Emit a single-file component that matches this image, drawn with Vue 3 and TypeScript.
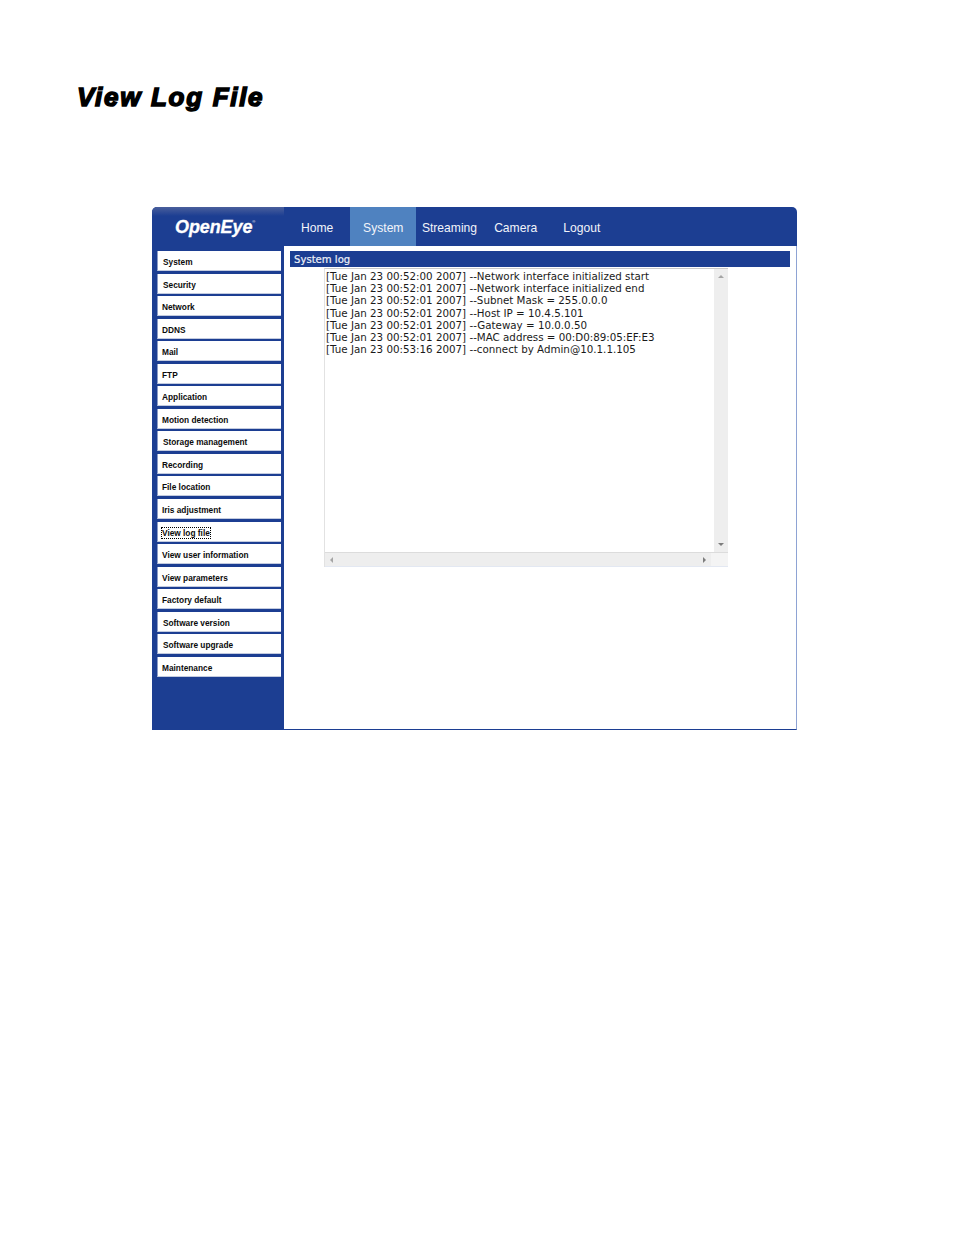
<script setup lang="ts">
const menu: string[] = ['System','Security','Network','DDNS','Mail','FTP','Application','Motion detection','Storage management','Recording','File location','Iris adjustment','View log file','View user information','View parameters','Factory default','Software version','Software upgrade','Maintenance']
const indented = new Set(['System','Security','Software version','Software upgrade','Storage management'])
const tabs: string[] = ['Home','System','Streaming','Camera','Logout']
const logs: string[] = [
  '[Tue Jan 23 00:52:00 2007] --Network interface initialized start',
  '[Tue Jan 23 00:52:01 2007] --Network interface initialized end',
  '[Tue Jan 23 00:52:01 2007] --Subnet Mask = 255.0.0.0',
  '[Tue Jan 23 00:52:01 2007] --Host IP = 10.4.5.101',
  '[Tue Jan 23 00:52:01 2007] --Gateway = 10.0.0.50',
  '[Tue Jan 23 00:52:01 2007] --MAC address = 00:D0:89:05:EF:E3',
  '[Tue Jan 23 00:53:16 2007] --connect by Admin@10.1.1.105',
]
</script>

<template>
  <div class="page">
    <h1 class="title">View Log File</h1>
    <div class="window">
      <aside class="side">
        <div class="logo"><span class="logo-text">OpenEye</span><sup class="reg">®</sup></div>
        <ul class="menu">
          <li v-for="m in menu" :key="m" class="item" :class="{ ind: indented.has(m) }">
            <span :class="{ focus: m === 'View log file' }">{{ m }}</span>
          </li>
        </ul>
      </aside>
      <main class="main">
        <nav class="nav">
          <a v-for="t in tabs" :key="t" class="tab" :class="{ active: t === 'System' }">{{ t }}</a>
        </nav>
        <section class="content">
          <div class="bar">System log</div>
          <div class="logbox">
            <div class="logrow">
              <div class="logtext">
                <div v-for="(l, i) in logs" :key="i" class="line">{{ l }}</div>
              </div>
              <div class="vscroll">
                <svg width="14" height="14" viewBox="0 0 14 14"><path d="M4 9h6L7 6z" fill="#a5a5a5"/></svg>
                <svg width="14" height="14" viewBox="0 0 14 14"><path d="M4 5h6L7 8z" fill="#7d7d7d"/></svg>
              </div>
            </div>
            <div class="hscroll">
              <svg width="14" height="14" viewBox="0 0 14 14"><path d="M8 4v6L5 7z" fill="#a5a5a5"/></svg>
              <svg class="hright" width="14" height="14" viewBox="0 0 14 14"><path d="M6 4v6l3-3z" fill="#7d7d7d"/></svg>
              <div class="corner"></div>
            </div>
          </div>
        </section>
      </main>
    </div>
  </div>
</template>

<style scoped>
.page {
  width: 954px;
  height: 1248px;
  background: #fff;
  padding: 83px 0 0 77px;
  box-sizing: border-box;
  overflow: hidden;
}
.title {
  margin: 0;
  font-family: "Liberation Sans", Arial, sans-serif;
  font-size: 26px;
  line-height: 29px;
  font-weight: 700;
  font-style: italic;
  color: #000;
  -webkit-text-stroke: 1.5px #000;
  letter-spacing: 1.7px;
}
.window {
  display: flex;
  width: 645px;
  height: 523px;
  margin: 95px 0 0 75px;
  background: #1c3e92;
  border-radius: 5px 5px 0 0;
  overflow: hidden;
}
.side {
  width: 132px;
  flex: none;
  display: flex;
  flex-direction: column;
}
.logo {
  height: 44px;
  box-sizing: border-box;
  padding: 9px 0 0 23px;
  display: flex;
  align-items: flex-start;
  color: #fff;
  background: linear-gradient(#4a5f9c 0, #1c3e92 9px);
  font-family: "Liberation Sans", Arial, sans-serif;
}
.logo-text {
  font-size: 18px;
  line-height: 22px;
  font-weight: 700;
  font-style: italic;
  letter-spacing: -0.1px;
  -webkit-text-stroke: 0.3px #fff;
}
.reg {
  font-size: 4px;
  line-height: 8px;
  margin: 2px 0 0 0;
}
.menu {
  list-style: none;
  margin: 0;
  padding: 0 0 0 5px;
  display: flex;
  flex-direction: column;
  gap: 2.55px;
}
.item {
  width: 124px;
  height: 20px;
  box-sizing: border-box;
  background: #fff;
  border-left: 1px solid #8c9cc6;
  border-bottom: 1px solid #c3cbdf;
  padding: 2px 0 0 4px;
  font-family: "Liberation Sans", Arial, sans-serif;
  font-size: 8.3px;
  font-weight: 700;
  line-height: 19px;
  color: #0b0b0b;
  white-space: nowrap;
}
.item.ind {
  padding-left: 5px;
}
.focus {
  outline: 1px dotted #000;
  outline-offset: 0;
  padding: 0;
}
.main {
  flex: 1;
  display: flex;
  flex-direction: column;
  min-width: 0;
}
.nav {
  height: 39px;
  flex: none;
  display: flex;
}
.tab {
  width: 66.2px;
  height: 39px;
  line-height: 42px;
  text-align: center;
  color: #f2f4fa;
  font-family: "Liberation Sans", Arial, sans-serif;
  font-size: 12.1px;
}
.tab.active {
  background: #4f82c0;
}
.content {
  flex: 1;
  background: #fff;
  border-right: 1px solid #8ea3d4;
  border-bottom: 1px solid #1c3e92;
  padding: 5px 6px 0 6px;
  display: flex;
  flex-direction: column;
}
.bar {
  height: 16px;
  background: #1c3e92;
  color: #eef1f8;
  font-family: "DejaVu Sans", Verdana, sans-serif;
  font-size: 10.1px;
  line-height: 17px;
  padding-left: 4px;
  -webkit-text-stroke: 0.2px #eef1f8;
}
.logbox {
  width: 404px;
  height: 299px;
  margin: 1px 0 0 34px;
  display: flex;
  flex-direction: column;
  box-sizing: border-box;
  border-top: 1px solid #c8c8c8;
  border-left: 1px solid #e2e2e2;
}
.logrow {
  flex: 1;
  display: flex;
  min-height: 0;
}
.logtext {
  flex: 1;
  padding: 1px 0 0 1px;
  font-family: "DejaVu Sans", Verdana, sans-serif;
  font-size: 10.3px;
  line-height: 12.17px;
  color: #1a1a1a;
  white-space: pre;
}
.vscroll {
  width: 14px;
  flex: none;
  background: #eeeeee;
  display: flex;
  flex-direction: column;
  justify-content: space-between;
}
.hscroll {
  height: 13px;
  flex: none;
  background: #eeeeee;
  border-top: 1px solid #dcdcdc;
  border-bottom: 1px solid #e3e8f2;
  display: flex;
  align-items: center;
}
.hright {
  margin-left: auto;
}
.corner {
  width: 17px;
  height: 13px;
  flex: none;
  background: #f4f4f4;
}
</style>
